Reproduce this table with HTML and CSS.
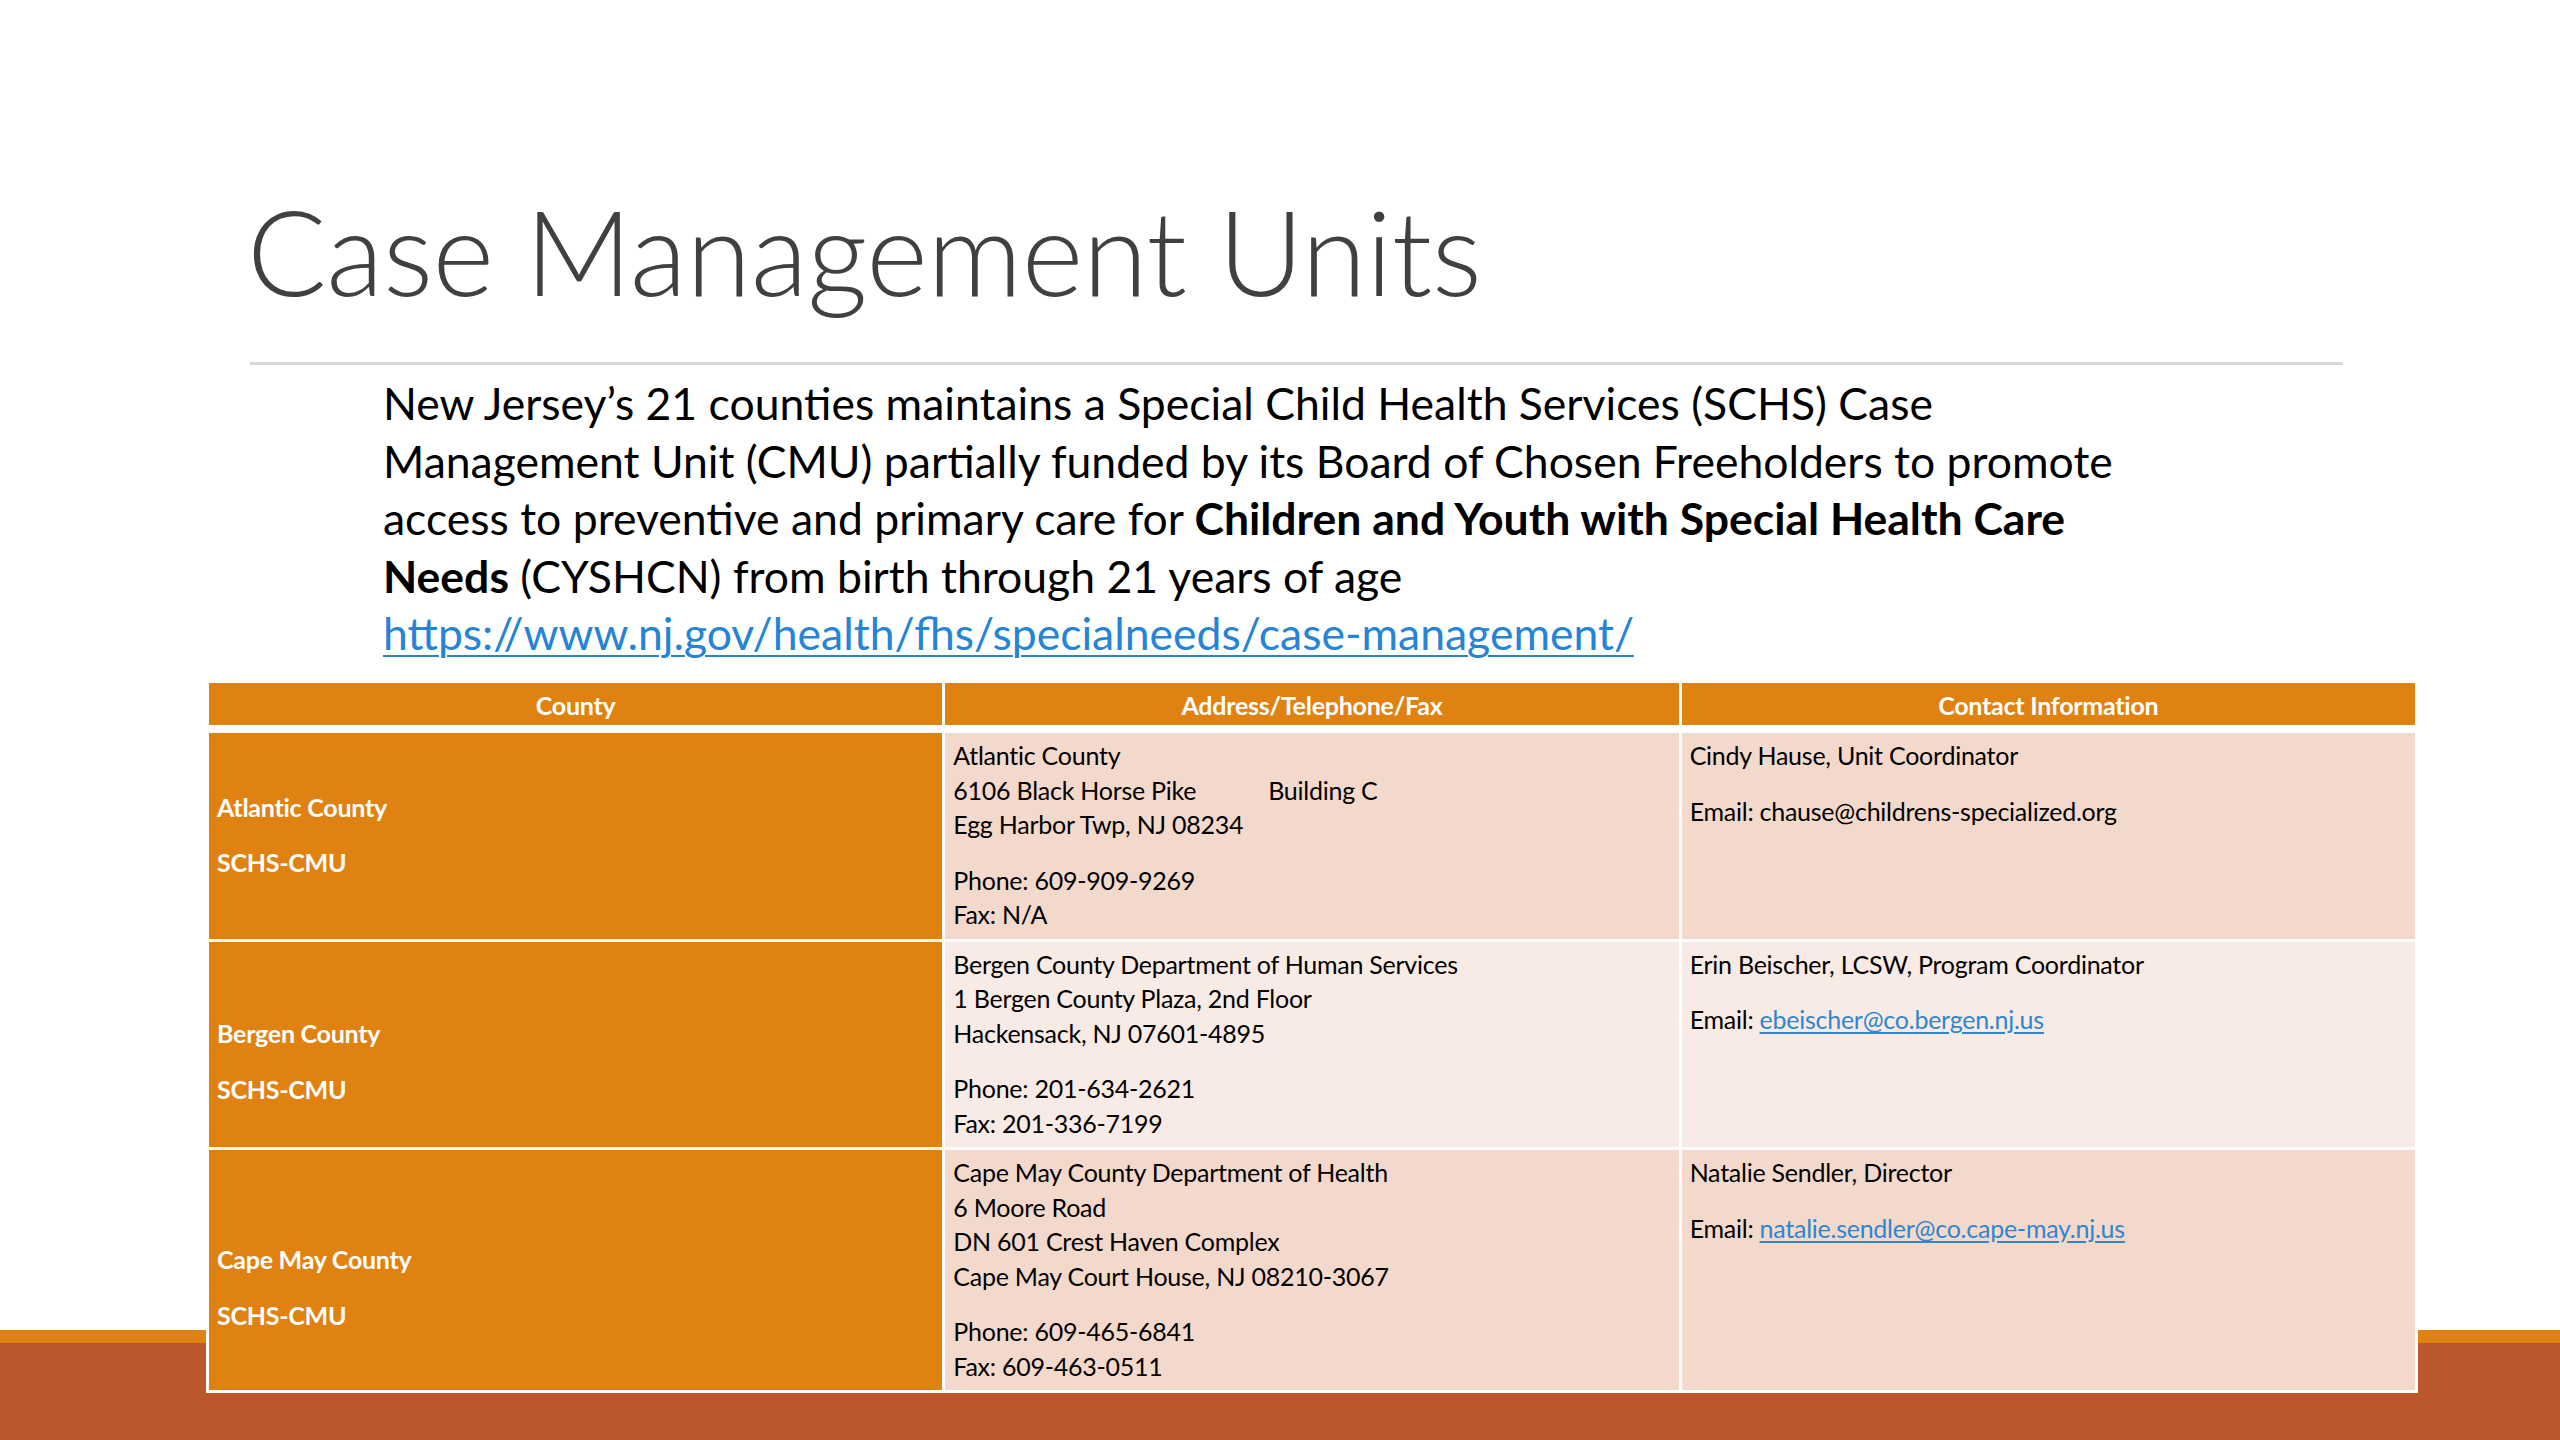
FILE: index.html
```html
<!DOCTYPE html>
<html lang="en">
<head>
<meta charset="utf-8">
<title>Case Management Units</title>
<link rel="stylesheet" href="styles.css">
</head>
<body>
<div class="slide">
  <h1 class="title">Case Management Units</h1>
  <hr class="rule">
  <p class="intro">New Jersey’s 21 counties maintains a Special Child Health Services (SCHS) Case<br>Management Unit (CMU) partially funded by its Board of Chosen Freeholders to promote<br>access to preventive and primary care for <b>Children and Youth with Special Health Care<br>Needs</b> (CYSHCN) from birth through 21 years of age<br><a class="link" href="#">https://www.nj.gov/health/fhs/specialneeds/case-management/</a></p>

  <table class="cmu-table">
    <colgroup><col class="col"><col class="col"><col class="col"></colgroup>
    <thead>
      <tr><th>County</th><th>Address/Telephone/Fax</th><th>Contact Information</th></tr>
    </thead>
    <tbody>
      <tr class="row row--dark">
        <td class="county"><div>Atlantic County</div><div class="gap">SCHS-CMU</div></td>
        <td class="cell"><div>Atlantic County<br>6106 Black Horse Pike<span class="tab">Building C</span><br>Egg Harbor Twp, NJ 08234</div><div class="gap">Phone: 609-909-9269<br>Fax: N/A</div></td>
        <td class="cell"><div>Cindy Hause, Unit Coordinator</div><div class="gap">Email: chause@childrens-specialized.org</div></td>
      </tr>
      <tr class="row row--light">
        <td class="county county--low"><div>Bergen County</div><div class="gap">SCHS-CMU</div></td>
        <td class="cell"><div>Bergen County Department of Human Services<br>1 Bergen County Plaza, 2nd Floor<br>Hackensack, NJ 07601-4895</div><div class="gap">Phone: 201-634-2621<br>Fax: 201-336-7199</div></td>
        <td class="cell"><div>Erin Beischer, LCSW, Program Coordinator</div><div class="gap">Email: <a class="mail" href="#">ebeischer@co.bergen.nj.us</a></div></td>
      </tr>
      <tr class="row row--dark">
        <td class="county county--low"><div>Cape May County</div><div class="gap">SCHS-CMU</div></td>
        <td class="cell"><div>Cape May County Department of Health<br>6 Moore Road<br>DN 601 Crest Haven Complex<br>Cape May Court House, NJ 08210-3067</div><div class="gap">Phone: 609-465-6841<br>Fax: 609-463-0511</div></td>
        <td class="cell"><div>Natalie Sendler, Director</div><div class="gap">Email: <a class="mail" href="#">natalie.sendler@co.cape-may.nj.us</a></div></td>
      </tr>
    </tbody>
  </table>

  <div class="band"></div>
</div>
</body>
</html>
```

FILE: styles.css
```css
html, body {
  margin: 0;
  padding: 0;
  background: #ffffff;
}

.slide {
  position: relative;
  width: 2560px;
  height: 1440px;
  overflow: hidden;
  font-family: Lato, "Open Sans", sans-serif;
  color: #000;
}

.title {
  margin: 0;
  padding: 192px 0 0 247px;
  font-family: Lato, sans-serif;
  font-weight: 300;
  font-size: 118px;
  line-height: 1;
  color: #404040;
  letter-spacing: -0.5px;
}

.rule {
  margin: 52px 0 0 250px;
  width: 2093px;
  height: 3px;
  border: 0;
  background: #d9d9d9;
}

.intro {
  margin: 9px 0 0 383px;
  font-size: 44.5px;
  line-height: 57.5px;
  color: #000;
}

.intro b {
  font-weight: 700;
}

.link {
  color: #2684d6;
  text-decoration: underline;
  text-decoration-thickness: 2px;
  text-underline-offset: 5px;
}

.cmu-table {
  position: relative;
  z-index: 2;
  margin: 18px 0 0 206px;
  width: 2212px;
  table-layout: fixed;
  border-collapse: collapse;
  border: 3px solid #ffffff;
  font-size: 25px;
  letter-spacing: -0.25px;
  line-height: 34.5px;
}

.col {
  width: 33.333%;
}

.cmu-table th {
  background: #e08212;
  color: #ffffff;
  font-weight: 700;
  text-align: center;
  padding: 5px 8px 3px;
  border: 3px solid #ffffff;
  border-bottom-width: 8px;
}

.cmu-table td {
  border: 3px solid #ffffff;
  padding: 5px 8px 7px;
  vertical-align: top;
  text-align: left;
}

.row--dark .cell {
  background: #f3d9cc;
}

.row--light .cell {
  background: #f8ebe6;
}

.cmu-table td.county {
  background: #e08212;
  color: #ffffff;
  font-weight: 700;
  vertical-align: middle;
}

.cmu-table td.county--low {
  padding-top: 41px;
}

.gap {
  margin-top: 21px;
}

.tab {
  margin-left: 72px;
}

.mail {
  color: #2f86d0;
  text-decoration: underline;
  text-underline-offset: 3px;
}

.band {
  position: absolute;
  left: 0;
  right: 0;
  bottom: 0;
  height: 97px;
  background: #ba572b;
  border-top: 13px solid #e08212;
  z-index: 1;
}
```
